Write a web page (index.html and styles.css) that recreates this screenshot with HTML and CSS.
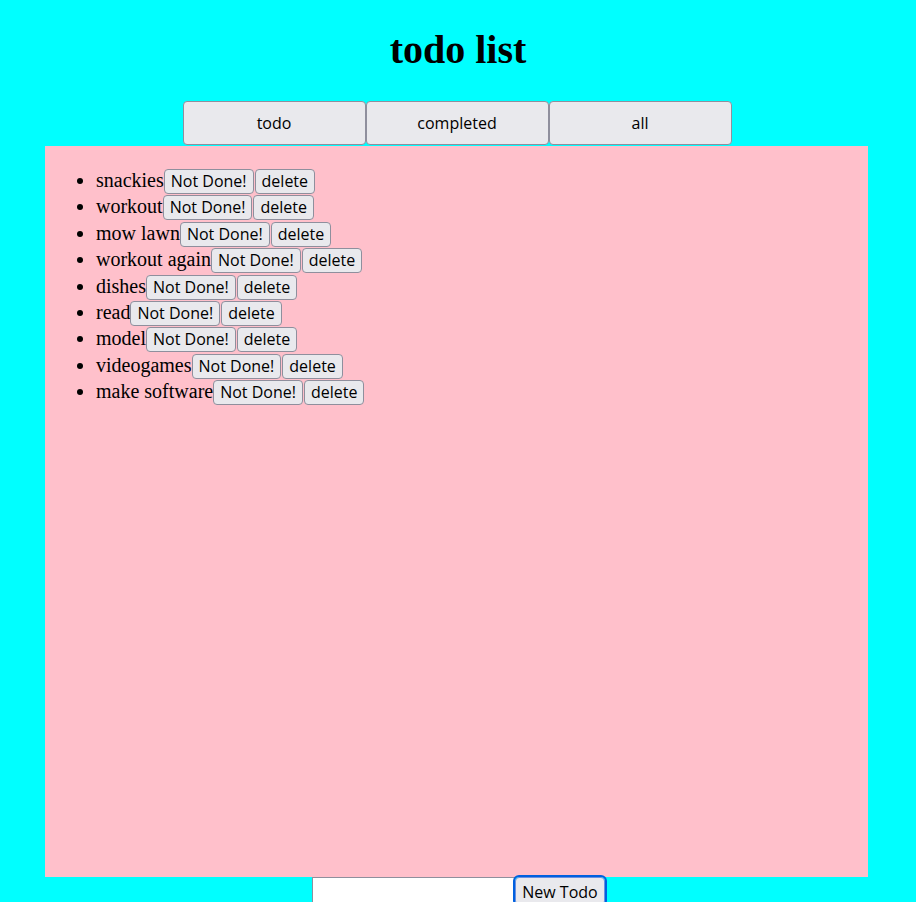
FILE: index.html
```html
<!DOCTYPE html>
<html>
<head>
<meta charset="utf-8">
<title>todo list</title>
<link rel="stylesheet" href="styles.css">
</head>
<body>
<h1 class="title">todo list</h1>
<div class="tabs">
  <button class="tab">todo</button>
  <button class="tab">completed</button>
  <button class="tab">all</button>
</div>
<div class="panel">
  <ul class="list">
    <li>snackies<button class="btn">Not Done!</button><button class="btn">delete</button></li>
    <li>workout<button class="btn">Not Done!</button><button class="btn">delete</button></li>
    <li>mow lawn<button class="btn">Not Done!</button><button class="btn">delete</button></li>
    <li>workout again<button class="btn">Not Done!</button><button class="btn">delete</button></li>
    <li>dishes<button class="btn">Not Done!</button><button class="btn">delete</button></li>
    <li>read<button class="btn">Not Done!</button><button class="btn">delete</button></li>
    <li>model<button class="btn">Not Done!</button><button class="btn">delete</button></li>
    <li>videogames<button class="btn">Not Done!</button><button class="btn">delete</button></li>
    <li>make software<button class="btn">Not Done!</button><button class="btn">delete</button></li>
  </ul>
</div>
<form class="new">
  <input class="new-input" type="text"><button class="btn new-btn" type="button">New Todo</button>
</form>
</body>
</html>
```
FILE: styles.css
```css
html, body {
  background: #00ffff;
}
body {
  margin: 0;
  padding: 0 10px;
  font-family: "Liberation Serif", serif;
  font-size: 20px;
  color: #000;
}
.title {
  font-size: 40px;
  font-weight: bold;
  text-align: center;
  margin: 0;
  padding: 27px 0 28px;
  line-height: 46px;
}
.tabs {
  display: flex;
  justify-content: center;
  margin-left: -2px;
}
.tab {
  width: 183px;
  height: 44px;
  font-family: "Open Sans", "Noto Sans", sans-serif;
  font-size: 16px;
  color: #000;
  background: #e9e9ed;
  border: 1px solid #8f8f9d;
  border-radius: 4px;
  padding: 0;
  margin: 0;
}
.panel {
  background: #ffc0cb;
  width: 823px;
  height: 731px;
  margin: 1px 0 0 35px;
  overflow: hidden;
}
.list {
  margin: 21px 0 20px;
  padding-left: 51px;
}
.list li {
  line-height: 26.4px;
  height: 26.4px;
}
.btn {
  font-family: "Open Sans", "Noto Sans", sans-serif;
  font-size: 16px;
  line-height: 20px;
  color: #000;
  background: #e9e9ed;
  border: 1px solid #8f8f9d;
  border-radius: 4px;
  padding: 1px 6px 2px;
  margin: 0 1px 0 0;
  vertical-align: baseline;
}
.new {
  display: flex;
  justify-content: center;
  align-items: flex-start;
  margin: 0;
  padding-left: 2px;
}
.new-input {
  width: 199px;
  height: 28px;
  border: 1px solid #8f8f9d;
  background: #fff;
  padding: 0 1px;
  margin: 0;
  border-radius: 0;
}
.new-btn {
  margin-top: 0;
  outline: 2px solid #0060df;
  outline-offset: 0;
  height: 28px;
  padding: 3px 6px 1px;
  border-color: #6a8fe0;
}
```
